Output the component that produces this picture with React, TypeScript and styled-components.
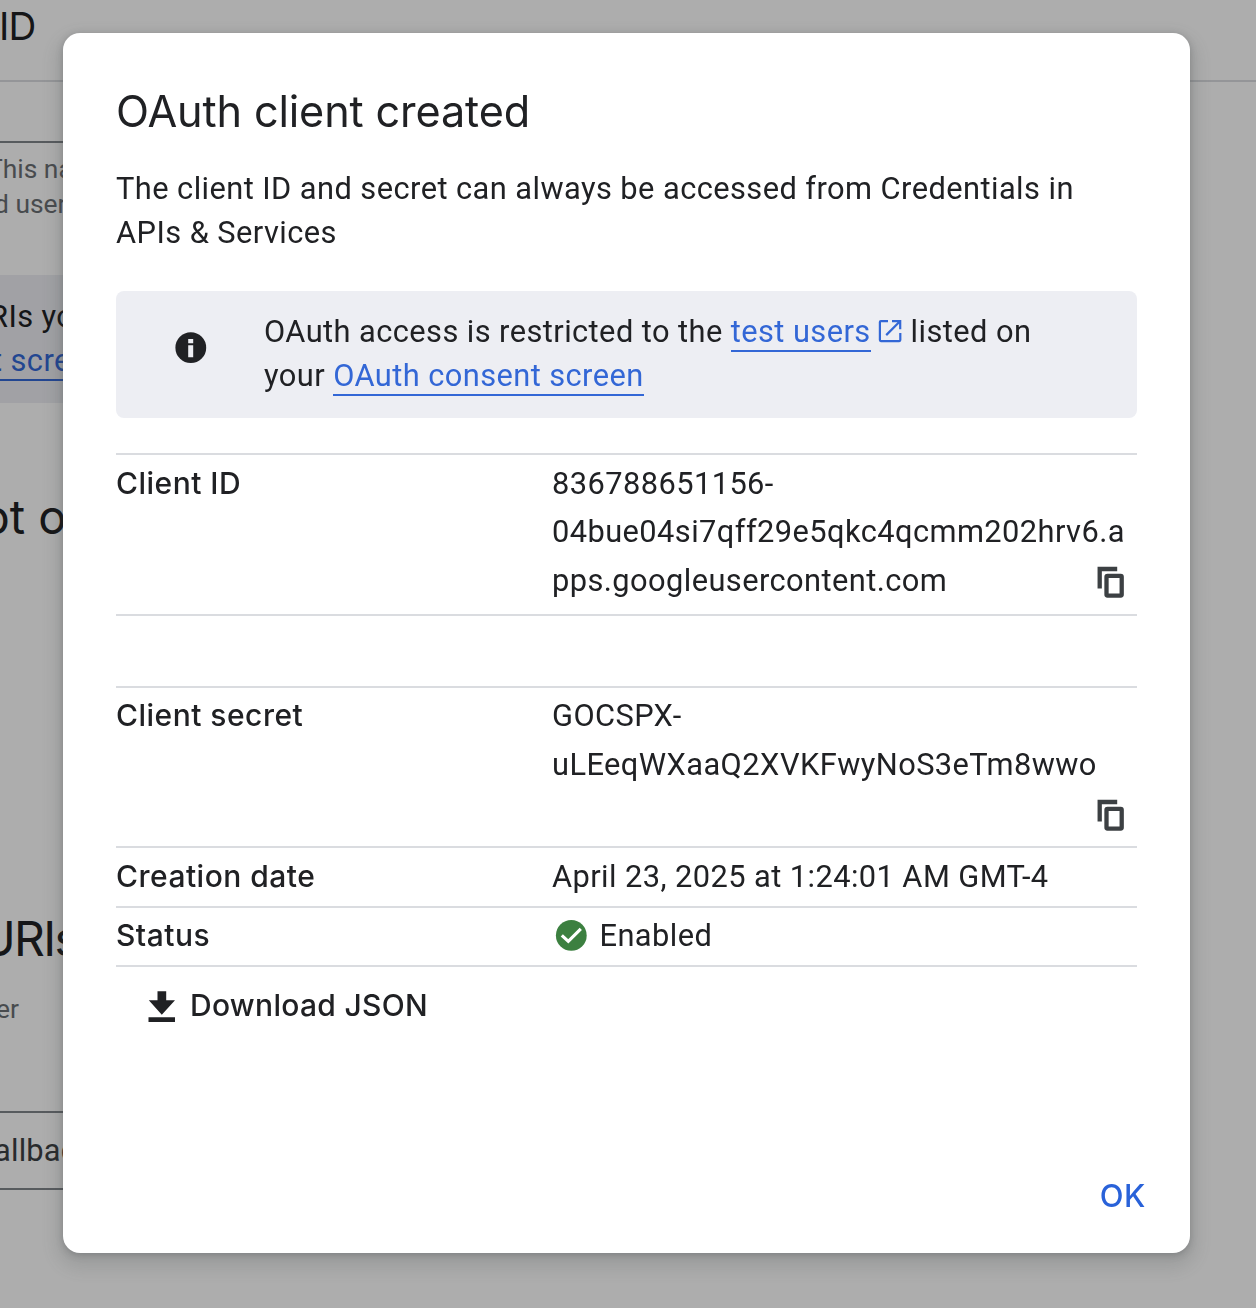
import React from 'react';
import styled, { createGlobalStyle } from 'styled-components';

const sans = `'Inter', 'Liberation Sans', sans-serif`;
const body = `'Roboto', 'Liberation Sans', sans-serif`;
const ink = '#202124';
const blue = '#3367d6';
const rule = '#dadce0';

const GlobalStyle = createGlobalStyle`
  * { box-sizing: border-box; }
  body { margin: 0; background: #fff; color: ${ink}; font-family: ${body}; overflow: hidden; }
`;

/* Page behind the dialog */
const Page = styled.main`
  display: flex;
  flex-direction: column;
  height: 1308px;
  overflow: hidden;
  white-space: nowrap;
`;

const PageHeader = styled.header`
  height: 82px;
  border-bottom: 2px solid ${rule};
`;

const PageTitle = styled.h1`
  margin: 0 0 0 -1px;
  font: 400 38.5px/52px ${sans};
  letter-spacing: -0.8px;
`;

const Form = styled.div`
  width: 1100px;
`;

const Heading = styled.h2<{ $size: number; $shift: number; $tracking?: number }>`
  margin: 0 0 0 ${(p) => p.$shift}px;
  padding-top: 86px;
  font: 400 ${(p) => p.$size}px/56px ${sans};
  letter-spacing: ${(p) => p.$tracking ?? 0}px;
`;

const NameField = styled.div`
  height: 61px;
  border-bottom: 2px solid #80868b;
`;

const Helper = styled.p<{ $shift: number }>`
  margin: 0 0 0 ${(p) => p.$shift}px;
  font: 400 26.4px/35px ${body};
  color: #6b6f74;
`;

const HelperGroup = styled.div`
  padding-top: 9px;
  height: 132px;
`;

const PageNotice = styled.section`
  height: 128px;
  padding-top: 20px;
  background: #edeef3;
  font: 400 30.8px/44px ${body};
  letter-spacing: 0.42px;
`;

const NoticeLine = styled.div<{ $shift: number }>`
  margin-left: ${(p) => p.$shift}px;
`;

const OriginsSection = styled.section`
  height: 422px;
`;

const UrisSection = styled.section`
  height: 286px;
`;

const UriHelper = styled.div`
  padding-top: 25px;
`;

const UriField = styled.div`
  height: 79px;
  border: solid #80868b;
  border-width: 2px 0;
  font: 400 30.8px/76px ${body};
  letter-spacing: 0.2px;
  color: #3c4043;
`;

/* Dialog */
const Scrim = styled.div`
  position: fixed;
  inset: 0;
  display: flex;
  justify-content: flex-start;
  align-items: flex-start;
  padding: 33px 0 0 63px;
  background: rgba(0, 0, 0, 0.32);
`;

const Dialog = styled.section`
  display: flex;
  flex-direction: column;
  width: 1127px;
  height: 1220px;
  padding: 50px 53px 35px;
  border-radius: 17px;
  background: #fff;
  box-shadow: 0 2px 7px rgba(60, 64, 67, 0.3), 0 9px 18px 7px rgba(60, 64, 67, 0.15);
`;

const Title = styled.h2`
  margin: 0;
  font: 400 43.2px/57px ${sans};
  letter-spacing: -0.13px;
`;

const Lead = styled.p`
  margin: 27px 0 36px;
  font: 400 30.8px/44px ${body};
  letter-spacing: 0.44px;
`;

const Notice = styled.aside`
  display: flex;
  height: 127px;
  padding: 19px 60px 0 59px;
  border-radius: 8px;
  background: #edeef3;
  font: 400 30.8px/44px ${body};
  letter-spacing: 0.43px;
`;

const NoticeIcon = styled.svg`
  flex: none;
  width: 32px;
  height: 32px;
  margin: 22px 57px 0 0;
`;

const Link = styled.a`
  color: ${blue};
  border-bottom: 2px solid ${blue};
`;

const ExternalIcon = styled.svg`
  width: 24px;
  height: 24px;
  margin: 0 9px 0 7px;
  vertical-align: -1px;
`;

const Details = styled.dl`
  margin: 35px 0 0;
  border-top: 2px solid ${rule};
`;

const Row = styled.div<{ $height: number; $top?: number }>`
  display: grid;
  grid-template-columns: 436px 1fr;
  height: ${(p) => p.$height}px;
  padding-top: ${(p) => p.$top ?? 4}px;
  border-bottom: 2px solid ${rule};
`;

const Gap = styled.div`
  height: 72px;
  border-bottom: 2px solid ${rule};
`;

const Label = styled.dt<{ $lift?: number }>`
  margin-top: ${(p) => -(p.$lift ?? 0)}px;
  font: 500 30px/48.5px ${sans};
  letter-spacing: 0.48px;
`;

const Value = styled.dd`
  margin: 0;
  font: 400 30.8px/48.5px ${body};
  letter-spacing: 0.43px;
`;

const ValueLine = styled.div`
  display: flex;
  align-items: center;
  height: 48.5px;
`;

const CopyButton = styled.button`
  display: flex;
  margin: 3px 12.5px 0 auto;
  padding: 0;
  border: 0;
  background: none;
`;

const StatusIcon = styled.svg`
  width: 32px;
  height: 32px;
  margin: 0 12.5px 0 3px;
`;

const Download = styled.button`
  display: flex;
  align-items: center;
  align-self: flex-start;
  gap: 14px;
  height: 44px;
  margin: 16px 0 0 32px;
  padding: 0;
  border: 0;
  background: none;
  color: ${ink};
  font: 500 30px/44px ${sans};
  letter-spacing: 0.3px;
`;

const DownloadIcon = styled.svg`
  width: 28px;
  height: 32px;
  margin-top: 3px;
`;

const Footer = styled.footer`
  display: flex;
  justify-content: flex-end;
  margin: auto -9px 0 0;
`;

const OkButton = styled.button`
  padding: 0;
  border: 0;
  background: none;
  color: #2962d9;
  font: 500 31px/44px ${sans};
  letter-spacing: 0.6px;
`;

function CopyIcon() {
  return (
    <svg width="28" height="32" viewBox="0 0 28 32" fill="none" stroke="#3c4043" strokeWidth="4.3">
      <path d="M2.7 22.6V3H20.2" />
      <rect x="9.5" y="9.8" width="15.2" height="19.8" rx="1" />
    </svg>
  );
}

export default function App() {
  return (
    <>
      <GlobalStyle />
      <Page>
        <PageHeader>
          <PageTitle>ID</PageTitle>
        </PageHeader>
        <Form>
          <NameField />
          <HelperGroup>
            <Helper $shift={-13}>This na</Helper>
            <Helper $shift={-6}>d user</Helper>
          </HelperGroup>
          <PageNotice>
            <NoticeLine $shift={-11}>RIs yo</NoticeLine>
            <NoticeLine $shift={-8}><Link>t scre</Link></NoticeLine>
          </PageNotice>
          <OriginsSection>
            <Heading $size={47} $shift={-19}>pt o</Heading>
          </OriginsSection>
          <UrisSection>
            <Heading $size={48} $shift={-20} $tracking={-1.7}>URIs</Heading>
            <UriHelper>
              <Helper $shift={-4}>er</Helper>
            </UriHelper>
          </UrisSection>
          <UriField>
            <NoticeLine $shift={-6}>allbac</NoticeLine>
          </UriField>
        </Form>
      </Page>

      <Scrim>
        <Dialog role="dialog">
          <Title>OAuth client created</Title>
          <Lead>
            The client ID and secret can always be accessed from Credentials in
            <br />
            APIs &amp; Services
          </Lead>
          <Notice>
            <NoticeIcon viewBox="0 0 32 32">
              <circle cx="15.8" cy="15.7" r="15.4" fill={ink} />
              <path d="M13.2 7h5v4.3h-5zM13.2 13.3h5v12h-5z" fill="#edeef3" />
            </NoticeIcon>
            <div>
              OAuth access is restricted to the <Link>test users</Link>
              <ExternalIcon viewBox="0 0 24 24" fill="none" stroke={blue} strokeWidth="2.2">
                <path d="M10 2.1H2.9a1 1 0 0 0-1 1v18a1 1 0 0 0 1 1h18.4a1 1 0 0 0 1-1V14" />
                <path d="M14 2.1h8.2v8.2M22 2.3 8.2 16.1" />
              </ExternalIcon>
              listed on
              <br />
              your <Link>OAuth consent screen</Link>
            </div>
          </Notice>

          <Details>
            <Row $height={161} $top={4.5}>
              <Label $lift={0.5}>Client ID</Label>
              <Value>
                <ValueLine>836788651156-</ValueLine>
                <ValueLine>04bue04si7qff29e5qkc4qcmm202hrv6.a</ValueLine>
                <ValueLine>
                  pps.googleusercontent.com
                  <CopyButton aria-label="Copy"><CopyIcon /></CopyButton>
                </ValueLine>
              </Value>
            </Row>
            <Gap />
            <Row $height={160}>
              <Label $lift={1}>Client secret</Label>
              <Value>
                <ValueLine>GOCSPX-</ValueLine>
                <ValueLine>uLEeqWXaaQ2XVKFwyNoS3eTm8wwo</ValueLine>
                <ValueLine>
                  <CopyButton aria-label="Copy"><CopyIcon /></CopyButton>
                </ValueLine>
              </Value>
            </Row>
            <Row $height={60} $top={5}>
              <Label $lift={1}>Creation date</Label>
              <Value>April 23, 2025 at 1:24:01 AM GMT-4</Value>
            </Row>
            <Row $height={59}>
              <Label $lift={1}>Status</Label>
              <Value>
                <ValueLine>
                  <StatusIcon viewBox="0 0 32 32">
                    <circle cx="16.3" cy="15.4" r="15.4" fill="#3c8040" />
                    <path d="M6.8 15.4 13.3 21.4 25.8 8.9" fill="none" stroke="#fff" strokeWidth="3.2" />
                  </StatusIcon>
                  Enabled
                </ValueLine>
              </Value>
            </Row>
          </Details>

          <Download>
            <DownloadIcon viewBox="0 0 28 32" fill={ink}>
              <path d="M9.5 0.2H18.2V9.2H27L13.8 23.7 0.8 9.2H9.5zM0.5 26.2H27V31H0.5z" />
            </DownloadIcon>
            Download JSON
          </Download>

          <Footer>
            <OkButton>OK</OkButton>
          </Footer>
        </Dialog>
      </Scrim>
    </>
  );
}
